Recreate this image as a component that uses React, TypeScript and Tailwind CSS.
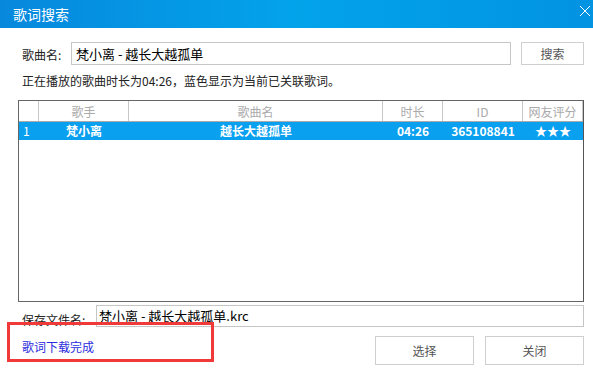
import React from "react";

type Col = { title: string; width: number; align?: "left" | "center" };

const columns: Col[] = [
  { title: "", width: 20, align: "left" },
  { title: "歌手", width: 90 },
  { title: "歌曲名", width: 254 },
  { title: "时长", width: 60 },
  { title: "ID", width: 80 },
  { title: "网友评分", width: 60 },
];

const rows = [["1", "梵小离", "越长大越孤单", "04:26", "365108841", "★★★"]];

const font = { fontFamily: '"Noto Sans CJK SC", "Liberation Sans", sans-serif' };

export default function App() {
  return (
    <div className="relative w-[593px] h-[383px] overflow-hidden bg-white text-[12px] text-[#222]" style={font}>
      {/* TITLE BAR */}
      <div className="h-[28px] flex items-center justify-between pl-[13px] pr-[2px] bg-gradient-to-r from-[#0788dd] via-[#03a3ea] to-[#0293e3]">
        <span className="text-white text-[14px] leading-none">歌词搜索</span>
        <svg width="12" height="12" viewBox="0 0 12 12" className="mb-[6px]">
          <path d="M1 1 L11 11 M11 1 L1 11" stroke="#fff" strokeWidth="1" />
        </svg>
      </div>

      {/* SONG NAME */}
      <div className="flex items-center mt-[14px] pl-[22px] h-[23px]">
        <span className="w-[49px] pt-[3px]">歌曲名:</span>
        <div className="w-[440px] h-[23px] border border-[#c6c6c6] flex items-center pl-[4px] text-[13px] text-black">
          梵小离 - 越长大越孤单
        </div>
        <button className="ml-[10px] w-[63px] h-[23px] border border-[#cfcfcf] bg-white text-[#555] text-[12px]">
          搜索
        </button>
      </div>

      <div className="pl-[22px] mt-[8px] leading-[16px] text-[12px]">
        正在播放的歌曲时长为04:26，蓝色显示为当前已关联歌词。
      </div>

      {/* TABLE */}
      <div className="ml-[18px] mt-[11px] w-[566px] h-[202px] border border-[#666] border-r-[#555]">
        <div className="flex h-[21px] border-b border-[#aaa] text-[#aaa]">
          {columns.map((c, i) => (
            <div
              key={i}
              style={{ width: c.width }}
              className="flex items-center justify-center border-r border-[#c8c8c8] leading-none pt-[1px]"
            >
              {c.title}
            </div>
          ))}
        </div>
        {rows.map((r, ri) => (
          <div key={ri} className="flex h-[18px] bg-[#0aa0f0] text-white font-bold">
            {r.map((v, i) => (
              <div
                key={i}
                style={{ width: columns[i].width }}
                className={
                  i === 0
                    ? "flex items-center pl-[4px] font-normal"
                    : "flex items-center justify-center"
                }
              >
                {v}
              </div>
            ))}
          </div>
        ))}
      </div>

      {/* SAVE NAME */}
      <div className="flex items-center mt-[3px] pl-[22px] h-[22px]">
        <span className="w-[74px] pt-[8px]">保存文件名:</span>
        <div className="w-[488px] h-[22px] border border-[#c6c6c6] flex items-center pl-[2px] text-[13px] text-black">
          梵小离 - 越长大越孤单.krc
        </div>
      </div>

      {/* FOOTER */}
      <div className="flex items-start mt-[9px] pl-[22px]">
        <span className="mt-[2px] text-[#2b2bdd]">歌词下载完成</span>
        <div className="ml-auto mr-[9px] flex gap-[11px]">
          <button className="w-[99px] h-[29px] border border-[#cfcfcf] bg-white text-[#555] text-[12px]">
            选择
          </button>
          <button className="w-[99px] h-[29px] border border-[#cfcfcf] bg-white text-[#555] text-[12px]">
            关闭
          </button>
        </div>
      </div>

      {/* ANNOTATION */}
      <div className="absolute left-[7px] top-[322px] w-[207px] h-[40px] border-[3px] border-[#f03a3a]" />
    </div>
  );
}
